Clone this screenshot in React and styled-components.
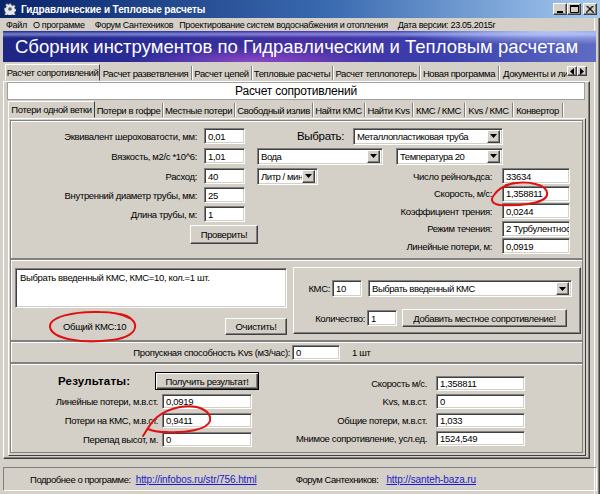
import React from "react";
import styled, { createGlobalStyle, css } from "styled-components";

const UI = `"Liberation Sans", Arial, sans-serif`;
const FACE = "#d4d0c8";

const GlobalStyle = createGlobalStyle`
  html, body { margin: 0; padding: 0; background: ${FACE}; }
  body { font-family: ${UI}; font-size: 9.5px; letter-spacing: -0.35px; color: #000; }
  * { box-sizing: border-box; }
`;

const sunken = css`
  background: #fff;
  border: 1px solid;
  border-color: #808080 #fff #fff #808080;
  box-shadow: inset 1px 1px 0 #404040, inset -1px -1px 0 ${FACE};
`;

const raised = css`
  background: ${FACE};
  border: 1px solid;
  border-color: #fff #404040 #404040 #fff;
  box-shadow: inset -1px -1px 0 #808080;
`;

const Window = styled.div`
  position: relative;
  width: 600px;
  height: 494px;
  background: ${FACE};
  display: flex;
  flex-direction: column;
  overflow: hidden;
  box-shadow: inset -1px 0 0 #404040, inset -2px 0 0 #808080, inset -5px 0 0 ${FACE}, inset -6px 0 0 #fff;
`;

/* ---------- caption ---------- */
const TitleBar = styled.div`
  height: 18px;
  flex: none;
  display: flex;
  align-items: center;
  padding: 0 3px 0 4px;
  background: linear-gradient(90deg, #0a246a 0%, #3a6ab0 55%, #a6caf0 100%);
`;
const TitleText = styled.span`
  margin-left: 5px;
  color: #fff;
  font-weight: bold;
  font-size: 10px;
  letter-spacing: -0.1px;
  white-space: nowrap;
`;
const CaptionButtons = styled.div`
  margin-left: auto;
  display: flex;
  align-items: center;
`;
const CaptionButton = styled.div`
  ${raised};
  width: 14px;
  height: 12px;
  margin-left: ${(p) => p.$gap || 0}px;
  display: flex;
  align-items: center;
  justify-content: center;
`;

const AppIcon = () => (
  <svg width="12" height="12" viewBox="0 0 12 12">
    <g fill="#e8e8e8" stroke="#555" strokeWidth="0.6">
      <path d="M5 0.5h2l.3 1.6 1.3.6 1.4-.9 1.4 1.4-.9 1.4.6 1.3 1.6.3v2l-1.6.3-.6 1.3.9 1.4-1.4 1.4-1.4-.9-1.3.6-.3 1.6H5l-.3-1.6-1.3-.6-1.4.9-1.4-1.4.9-1.4-.6-1.3L.2 7V5l1.6-.3.6-1.3-.9-1.4 1.4-1.4 1.4.9 1.3-.6z" />
    </g>
    <circle cx="6" cy="6" r="1.8" fill="#4a5a8a" />
  </svg>
);

/* ---------- menu ---------- */
const MenuBar = styled.div`
  height: 13px;
  flex: none;
  display: flex;
  align-items: center;
  padding-left: 6px;
  gap: 6px;
  font-size: 9px;
  letter-spacing: -0.3px;
  white-space: nowrap;
`;
const MenuItem = styled.span`
  margin-left: ${(p) => p.$ml || 0}px;
`;

/* ---------- banner ---------- */
const Banner = styled.div`
  height: 31px;
  flex: none;
  margin: 0 4px 0 3px;
  display: flex;
  align-items: center;
  padding-left: 12px;
  background:
    linear-gradient(180deg, rgba(190, 205, 255, 0) 0%, rgba(190, 205, 255, 0.55) 10%, rgba(190, 205, 255, 0) 22%),
    radial-gradient(ellipse 30% 70% at 42% 100%, rgba(210, 90, 230, 0.55), rgba(210, 90, 230, 0) 70%),
    radial-gradient(ellipse 35% 60% at 92% 0%, rgba(200, 215, 255, 0.85), rgba(200, 215, 255, 0) 75%),
    linear-gradient(90deg, #1e2584 0%, #2a2d98 25%, #4630a4 50%, #3a3fae 75%, #5f6cc4 100%);
`;
const BannerText = styled.span`
  color: #fff;
  font-size: 18.5px;
  letter-spacing: 0;
  white-space: nowrap;
`;

/* ---------- tabs ---------- */
const PageControl = styled.div`
  flex: none;
  margin: 0 0 0 3px;
  width: 587px;
  display: flex;
  flex-direction: column;
`;
const TabStrip = styled.div`
  height: ${(p) => p.$h}px;
  flex: none;
  display: flex;
  align-items: flex-end;
  padding-left: ${(p) => p.$pad}px;
`;
const TabList = styled.div`
  flex: 1;
  display: flex;
  align-items: flex-end;
  height: 100%;
  overflow: hidden;
`;
const Tab = styled.div`
  flex: none;
  width: ${(p) => p.$w}px;
  height: 14px;
  margin-bottom: 1px;
  display: flex;
  align-items: center;
  justify-content: ${(p) => (p.$clipped ? "flex-start" : "center")};
  padding-left: ${(p) => (p.$clipped ? 4 : 0)}px;
  white-space: nowrap;
  overflow: hidden;
  letter-spacing: -0.4px;
  border-right: 1px solid #808080;
  box-shadow: 1px 0 0 #fff;
  ${(p) =>
    p.$active &&
    css`
      height: 17px;
      margin-bottom: 0;
      border: 1px solid;
      border-color: #fff #404040 transparent #fff;
      box-shadow: none;
    `}
`;
const TabScroll = styled.div`
  display: flex;
  align-self: flex-start;
  margin: 4px 3px 0 0;
`;
const ScrollButton = styled.div`
  ${raised};
  width: 10px;
  height: 10px;
  display: flex;
  align-items: center;
  justify-content: center;
`;

const Page = styled.div`
  height: ${(p) => p.$h}px;
  flex: none;
  display: flex;
  flex-direction: column;
  border: 1px solid;
  border-color: #fff #404040 #404040 #fff;
  box-shadow: inset -1px -1px 0 #808080;
`;
const PageHeader = styled.div`
  height: 18px;
  flex: none;
  margin: 0 4px 0 3px;
  background: #fff;
  border: 1px solid #a0a0a0;
  display: flex;
  align-items: center;
  justify-content: center;
  font-size: 12px;
  letter-spacing: -0.2px;
`;
const SubPage = styled.div`
  height: 338px;
  flex: none;
  margin: 0 3px 0 4px;
  padding: 1px 2px 2px 1px;
  display: flex;
  flex-direction: column;
  border: 1px solid;
  border-color: #fff #404040 #404040 #fff;
`;

/* ---------- generic controls ---------- */
const Panel = styled.div`
  height: ${(p) => p.$h}px;
  flex: none;
  border: 1px solid #808080;
  box-shadow: inset 1px 1px 0 #fff;
`;
const Field = styled.input.attrs({ readOnly: true })`
  ${sunken};
  flex: none;
  width: ${(p) => p.$w}px;
  height: ${(p) => p.$h || 16}px;
  margin-left: ${(p) => p.$ml || 0}px;
  padding: 0 0 0 3px;
  font: 9.5px ${UI};
  letter-spacing: -0.3px;
  color: #000;
  outline: none;
`;
const Button = styled.div`
  ${raised};
  flex: none;
  width: ${(p) => p.$w}px;
  height: ${(p) => p.$h || 18}px;
  margin-left: ${(p) => (p.$push ? "auto" : `${p.$ml || 0}px`)};
  display: flex;
  align-items: center;
  justify-content: center;
  white-space: nowrap;
  ${(p) =>
    p.$default &&
    css`
      border: 1px solid #000;
      box-shadow: inset 1px 1px 0 #fff, inset -1px -1px 0 #404040, inset -2px -2px 0 #808080;
    `}
`;
const ComboBox = styled.div`
  ${sunken};
  flex: none;
  width: ${(p) => p.$w}px;
  height: ${(p) => p.$h || 17}px;
  margin-left: ${(p) => p.$ml || 0}px;
  display: flex;
  align-items: center;
  padding: 0 2px 0 2px;
`;
const ComboText = styled.span`
  flex: 1;
  white-space: nowrap;
  overflow: hidden;
  padding-left: 1px;
  letter-spacing: -0.45px;
`;
const ComboArrow = styled.span`
  ${raised};
  flex: none;
  width: 13px;
  height: ${(p) => p.$h || 13}px;
  display: flex;
  align-items: center;
  justify-content: center;
`;
const Arrow = ({ dir = "down" }) => {
  const d = {
    down: "M0 0h7L3.5 4z",
    left: "M4 0v7L0 3.5z",
    right: "M0 0v7l4-3.5z",
  }[dir];
  const w = dir === "down" ? 7 : 4;
  const h = dir === "down" ? 4 : 7;
  return (
    <svg width={w} height={h} viewBox={`0 0 ${w} ${h}`}>
      <path d={d} fill="#000" />
    </svg>
  );
};
const Combo = ({ w, h, ml, children }) => (
  <ComboBox $w={w} $h={h} $ml={ml}>
    <ComboText>{children}</ComboText>
    <ComboArrow $h={(h || 17) - 4}>
      <Arrow />
    </ComboArrow>
  </ComboBox>
);

/* ---------- pipe panel ---------- */
const PipeBody = styled.div`
  display: flex;
  flex-direction: column;
  padding-top: 7px;
  gap: 4px;
`;
const FormRow = styled.div`
  display: flex;
  align-items: center;
  height: ${(p) => p.$h || 16}px;
`;
const RowLabel = styled.span`
  flex: none;
  display: flex;
  justify-content: flex-end;
  width: ${(p) => p.$w}px;
  margin-right: ${(p) => p.$gap || 0}px;
  white-space: nowrap;
`;
const ChooseLabel = styled.span`
  flex: none;
  width: 56px;
  margin-left: 52px;
  font-size: 11.5px;
  letter-spacing: -0.3px;
  white-space: nowrap;
`;
const Split = styled.div`
  display: flex;
  align-items: flex-start;
`;
const LeftColumn = styled.div`
  display: flex;
  flex-direction: column;
  gap: 3px;
`;
const ValueGrid = styled.div`
  display: grid;
  grid-template-columns: ${(p) => p.$label || "auto"} ${(p) => p.$input}px;
  grid-auto-rows: ${(p) => p.$row}px;
  column-gap: ${(p) => p.$gap}px;
  row-gap: ${(p) => p.$rowGap}px;
  align-items: center;
  justify-items: end;
  margin: ${(p) => p.$margin};
  & > input {
    justify-self: start;
  }
`;
const GridLabel = styled.span`
  white-space: nowrap;
`;

/* ---------- local losses panel ---------- */
const LossesBody = styled.div`
  display: flex;
  align-items: flex-start;
  padding: 7px 0 0 4px;
`;
const LeftArea = styled.div`
  width: 272px;
  margin: 1px 6px 0 0;
  display: flex;
  flex-direction: column;
`;
const Memo = styled.div`
  ${sunken};
  height: 40px;
  padding: 3px 4px;
  white-space: nowrap;
`;
const MemoFooter = styled.div`
  display: flex;
  align-items: center;
  height: 17px;
  margin-top: 10px;
`;
const TotalLabel = styled.span`
  margin-left: 48px;
`;
const EntryBox = styled.div`
  ${raised};
  width: 288px;
  height: 67px;
  display: flex;
  flex-direction: column;
  padding: 12px 0 0 13px;
`;
const EntryRow = styled.div`
  display: flex;
  align-items: center;
  height: ${(p) => p.$h}px;
  margin: ${(p) => p.$margin};
`;

/* ---------- kvs row ---------- */
const KvsBody = styled.div`
  height: 100%;
  display: flex;
  align-items: center;
`;
const Units = styled.span`
  margin-left: 12px;
`;

/* ---------- results ---------- */
const ResultsBody = styled.div`
  display: flex;
  align-items: flex-start;
  padding-top: 8px;
`;
const ResultsLeft = styled.div`
  display: flex;
  flex-direction: column;
`;
const ResultsHead = styled.div`
  display: flex;
  align-items: center;
  height: 18px;
`;
const ResultsTitle = styled.span`
  flex: none;
  width: 97px;
  margin-left: 47px;
  font-weight: bold;
  font-size: 11.5px;
  letter-spacing: 0.2px;
`;

/* ---------- footer ---------- */
const Footer = styled.div`
  height: 24px;
  flex: none;
  margin: 8px 3px 0 3px;
  display: flex;
  align-items: center;
  padding-left: 26px;
  border: 1px solid;
  border-color: #808080 #fff #fff #808080;
  font-size: 9.5px;
  letter-spacing: -0.45px;
  white-space: nowrap;
`;
const FooterLabel = styled.span`
  flex: none;
  margin-left: ${(p) => p.$ml || 0}px;
`;
const Link = styled.a`
  flex: none;
  margin-left: ${(p) => p.$ml || 0}px;
  color: #1a1acc;
  text-decoration: underline;
  font-size: 10px;
  letter-spacing: -0.1px;
`;

/* ---------- hand-drawn red marks ---------- */
const Marks = styled.svg`
  position: absolute;
  left: 0;
  top: 0;
  width: 600px;
  height: 494px;
  pointer-events: none;
`;

const topTabs = [
  ["Расчет сопротивлений", 95, true],
  ["Расчет разветвления", 92],
  ["Расчет цепей", 60],
  ["Тепловые расчеты", 81],
  ["Расчет теплопотерь", 87],
  ["Новая программа", 79],
  ["Документы и литература", 130, false, true],
];

const subTabs = [
  ["Потери одной ветки", 87, true],
  ["Потери в гофре", 68],
  ["Местные потери", 72],
  ["Свободный излив", 78],
  ["Найти КМС", 52],
  ["Найти Kvs", 48],
  ["КМС / КМС", 52],
  ["Kvs / КМС", 48],
  ["Конвертор", 50],
];

const menuItems = [
  ["Файл", 0],
  ["О программе", 0],
  ["Форум Сантехников", 4],
  ["Проектирование систем водоснабжения и отопления", 0],
  ["Дата версии: 23.05.2015г", 4],
];

const flowRows = [
  ["Число рейнольдса:", "33634"],
  ["Скорость, м/с:", "1,358811"],
  ["Коэффициент трения:", "0,0244"],
  ["Режим течения:", "2 Турбулентност"],
  ["Линейные потери, м:", "0,0919"],
];

const lossRows = [
  ["Линейные потери, м.в.ст.", "0,0919"],
  ["Потери на КМС, м.в.ст.", "0,9411"],
  ["Перепад высот, м.", "0"],
];

const totalRows = [
  ["Скорость м/с.", "1,358811"],
  ["Kvs, м.в.ст.", "0"],
  ["Общие потери, м.в.ст.", "1,033"],
  ["Мнимое сопротивление, усл.ед.", "1524,549"],
];

export default function App() {
  return (
    <>
      <GlobalStyle />
      <Window>
        <TitleBar>
          <AppIcon />
          <TitleText>Гидравлические и Тепловые расчеты</TitleText>
          <CaptionButtons>
            <CaptionButton>
              <svg width="6" height="8" viewBox="0 0 6 8">
                <rect x="0" y="6" width="6" height="2" fill="#000" />
              </svg>
            </CaptionButton>
            <CaptionButton>
              <svg width="9" height="8" viewBox="0 0 9 8">
                <path d="M0.5 0.5h8v7h-8z" fill="none" stroke="#000" />
                <rect x="0" y="0" width="9" height="2" fill="#000" />
              </svg>
            </CaptionButton>
            <CaptionButton $gap={2}>
              <svg width="8" height="7" viewBox="0 0 8 7">
                <path d="M0.5 0l7 7M7.5 0l-7 7M1.5 0l7 7M6.5 0l-7 7" stroke="#000" strokeWidth="1" />
              </svg>
            </CaptionButton>
          </CaptionButtons>
        </TitleBar>

        <MenuBar>
          {menuItems.map(([m, ml]) => (
            <MenuItem key={m} $ml={ml}>
              {m}
            </MenuItem>
          ))}
        </MenuBar>

        <Banner>
          <BannerText>Сборник инструментов по Гидравлическим и Тепловым расчетам</BannerText>
        </Banner>

        <PageControl>
          <TabStrip $h={19} $pad={2}>
            <TabList>
              {topTabs.map(([t, w, a, c]) => (
                <Tab key={t} $w={w} $active={a} $clipped={c}>
                  {t}
                </Tab>
              ))}
            </TabList>
            <TabScroll>
              <ScrollButton>
                <Arrow dir="left" />
              </ScrollButton>
              <ScrollButton>
                <Arrow dir="right" />
              </ScrollButton>
            </TabScroll>
          </TabStrip>

          <Page $h={378}>
            <PageHeader>Расчет сопротивлений</PageHeader>
            <TabStrip $h={18} $pad={4}>
              <TabList>
                {subTabs.map(([t, w, a]) => (
                  <Tab key={t} $w={w} $active={a}>
                    {t}
                  </Tab>
                ))}
              </TabList>
            </TabStrip>

            <SubPage>
              <Panel $h={139}>
                <PipeBody>
                  <FormRow>
                    <RowLabel $w={186} $gap={7}>Эквивалент шероховатости, мм:</RowLabel>
                    <Field $w={41} defaultValue="0,01" />
                    <ChooseLabel>Выбрать:</ChooseLabel>
                    <Combo w={150}>Металлопластиковая труба</Combo>
                  </FormRow>
                  <FormRow>
                    <RowLabel $w={186} $gap={7}>Вязкость, м2/с *10^6:</RowLabel>
                    <Field $w={41} defaultValue="1,01" />
                    <Combo w={126} ml={12}>Вода</Combo>
                    <Combo w={107} ml={13}>Температура 20</Combo>
                  </FormRow>
                  <Split>
                    <LeftColumn>
                      <FormRow>
                        <RowLabel $w={186} $gap={7}>Расход:</RowLabel>
                        <Field $w={41} defaultValue="40" />
                        <Combo w={61} ml={12}>Литр / мин</Combo>
                      </FormRow>
                      <FormRow>
                        <RowLabel $w={186} $gap={7}>Внутренний диаметр трубы, мм:</RowLabel>
                        <Field $w={41} defaultValue="25" />
                      </FormRow>
                      <FormRow>
                        <RowLabel $w={186} $gap={7}>Длина трубы, м:</RowLabel>
                        <Field $w={41} defaultValue="1" />
                      </FormRow>
                      <FormRow $h={19}>
                        <Button $w={68} $h={19} $ml={179}>Проверить!</Button>
                      </FormRow>
                    </LeftColumn>
                    <ValueGrid $input={68} $row={16} $gap={10} $rowGap={1.5} $margin="0 12px 0 auto">
                      {flowRows.map(([l, v]) => (
                        <React.Fragment key={l}>
                          <GridLabel>{l}</GridLabel>
                          <Field $w={68} defaultValue={v} />
                        </React.Fragment>
                      ))}
                    </ValueGrid>
                  </Split>
                </PipeBody>
              </Panel>

              <Panel $h={82}>
                <LossesBody>
                  <LeftArea>
                    <Memo>Выбрать введенный КМС, КМС=10, кол.=1 шт.</Memo>
                    <MemoFooter>
                      <TotalLabel>Общий КМС:10</TotalLabel>
                      <Button $w={62} $h={17} $push>
                        Очистить!
                      </Button>
                    </MemoFooter>
                  </LeftArea>
                  <EntryBox>
                    <EntryRow $h={17} $margin="0">
                      <RowLabel $w={23} $gap={2}>КМС:</RowLabel>
                      <Field $w={30} $h={17} defaultValue="10" />
                      <Combo w={204} ml={6}>Выбрать введенный КМС</Combo>
                    </EntryRow>
                    <EntryRow $h={18} $margin="12px 0 0 8px">
                      <RowLabel $w={50} $gap={2}>Количество:</RowLabel>
                      <Field $w={30} defaultValue="1" />
                      <Button $w={165} $ml={5}>Добавить местное сопротивление!</Button>
                    </EntryRow>
                  </EntryBox>
                </LossesBody>
              </Panel>

              <Panel $h={22}>
                <KvsBody>
                  <RowLabel $w={279} $gap={2}>Пропускная способность Kvs (м3/час):</RowLabel>
                  <Field $w={48} $h={15} defaultValue="0" />
                  <Units>1 шт</Units>
                </KvsBody>
              </Panel>

              <Panel $h={90}>
                <ResultsBody>
                  <ResultsLeft>
                    <ResultsHead>
                      <ResultsTitle>Результаты:</ResultsTitle>
                      <Button $w={104} $default>Получить результат!</Button>
                    </ResultsHead>
                    <ValueGrid $label="147px" $input={90} $row={15} $gap={4} $rowGap={4} $margin="4px 0 0 0">
                      {lossRows.map(([l, v]) => (
                        <React.Fragment key={l}>
                          <GridLabel>{l}</GridLabel>
                          <Field $w={90} $h={15} defaultValue={v} />
                        </React.Fragment>
                      ))}
                    </ValueGrid>
                  </ResultsLeft>
                  <ValueGrid $input={89} $row={15} $gap={9} $rowGap={3.3} $margin="4px 57px 0 auto">
                    {totalRows.map(([l, v]) => (
                      <React.Fragment key={l}>
                        <GridLabel>{l}</GridLabel>
                        <Field $w={89} $h={15} defaultValue={v} />
                      </React.Fragment>
                    ))}
                  </ValueGrid>
                </ResultsBody>
              </Panel>
            </SubPage>
          </Page>
        </PageControl>

        <Footer>
          <FooterLabel>Подробнее о программе:</FooterLabel>
          <Link $ml={5} href="#">http://infobos.ru/str/756.html</Link>
          <FooterLabel $ml={39}>Форум Сантехников:</FooterLabel>
          <Link $ml={8} href="#">http://santeh-baza.ru</Link>
        </Footer>

        <Marks viewBox="0 0 600 494">
          <g fill="none" stroke="#e01010" strokeWidth="2" strokeLinecap="round">
            <path d="M506 185 C528 179 549 185 547 195 C545 204 518 206 500 205 C492 204 490 200 494 195 C498 189 506 185 514 183" />
            <path d="M120 314 C140 318 143 336 112 340 C82 344 52 339 50 327 C49 317 74 311 100 312 C112 312 122 314 129 318" />
            <path d="M143 436 C150 425 155 412 180 407 C200 404 212 412 210 421 C207 430 186 433 166 432 C158 432 152 431 148 429" />
          </g>
        </Marks>
      </Window>
    </>
  );
}
